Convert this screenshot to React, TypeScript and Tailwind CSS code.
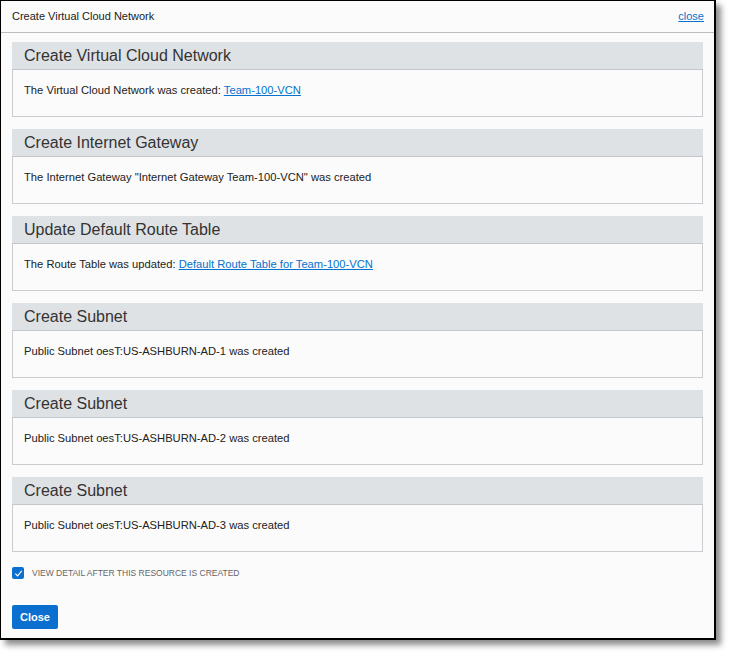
const sections: { title: string; text: string; link?: string }[] = [
  { title: "Create Virtual Cloud Network", text: "The Virtual Cloud Network was created: ", link: "Team-100-VCN" },
  { title: "Create Internet Gateway", text: 'The Internet Gateway "Internet Gateway Team-100-VCN" was created' },
  { title: "Update Default Route Table", text: "The Route Table was updated: ", link: "Default Route Table for Team-100-VCN" },
  { title: "Create Subnet", text: "Public Subnet oesT:US-ASHBURN-AD-1 was created" },
  { title: "Create Subnet", text: "Public Subnet oesT:US-ASHBURN-AD-2 was created" },
  { title: "Create Subnet", text: "Public Subnet oesT:US-ASHBURN-AD-3 was created" },
];

function Section({ s }: { s: (typeof sections)[number] }) {
  return (
    <div>
      <div className="flex h-[28px] items-center border-b border-[#c3c7cc] bg-[#dfe2e5] px-[12px] text-[16px] text-[#333]">
        {s.title}
      </div>
      <div className="h-[47px] border-x border-b border-[#c9ccd1] bg-[#fbfbfb] px-[11px] pt-[12px] text-[11.2px] text-[#222]">
        {s.text}
        {s.link && <a className="text-[#0572ce] underline">{s.link}</a>}
      </div>
    </div>
  );
}

export default function App() {
  return (
    <div className="h-[655px] w-[730px] bg-white font-['Liberation_Sans',Arial,sans-serif]">
      <div className="flex h-[640px] w-[716px] flex-col border border-r-2 border-b-2 border-black bg-[#fbfbfb] shadow-[5px_5px_6px_rgba(0,0,0,0.45)]">
        <div className="flex h-[32px] shrink-0 items-center justify-between border-b border-[#bdbdbd] pl-[11px] pr-[10px] text-[11px] text-[#222]">
          <span>Create Virtual Cloud Network</span>
          <a className="text-[#0572ce] underline">close</a>
        </div>
        <div className="flex flex-col gap-[12px] px-[11px] pt-[9px]">
          {sections.map((s, i) => (
            <Section key={i} s={s} />
          ))}
        </div>
        <div className="mt-[15px] flex items-center gap-[8px] px-[11px]">
          <span className="flex h-[12px] w-[12px] items-center justify-center rounded-[2px] bg-[#0b6fcf]">
            <svg width="9" height="9" viewBox="0 0 10 10" fill="none">
              <path d="M1.5 5.2 L4 7.6 L8.6 2.2" stroke="white" strokeWidth="1.3" />
            </svg>
          </span>
          <span className="text-[8.5px] uppercase text-[#666]">View detail after this resource is created</span>
        </div>
        <div className="mt-[24px] px-[11px]">
          <button className="h-[24px] w-[46px] rounded-[2px] bg-[#0b6fcf] text-[11px] font-bold text-white">Close</button>
        </div>
      </div>
    </div>
  );
}
